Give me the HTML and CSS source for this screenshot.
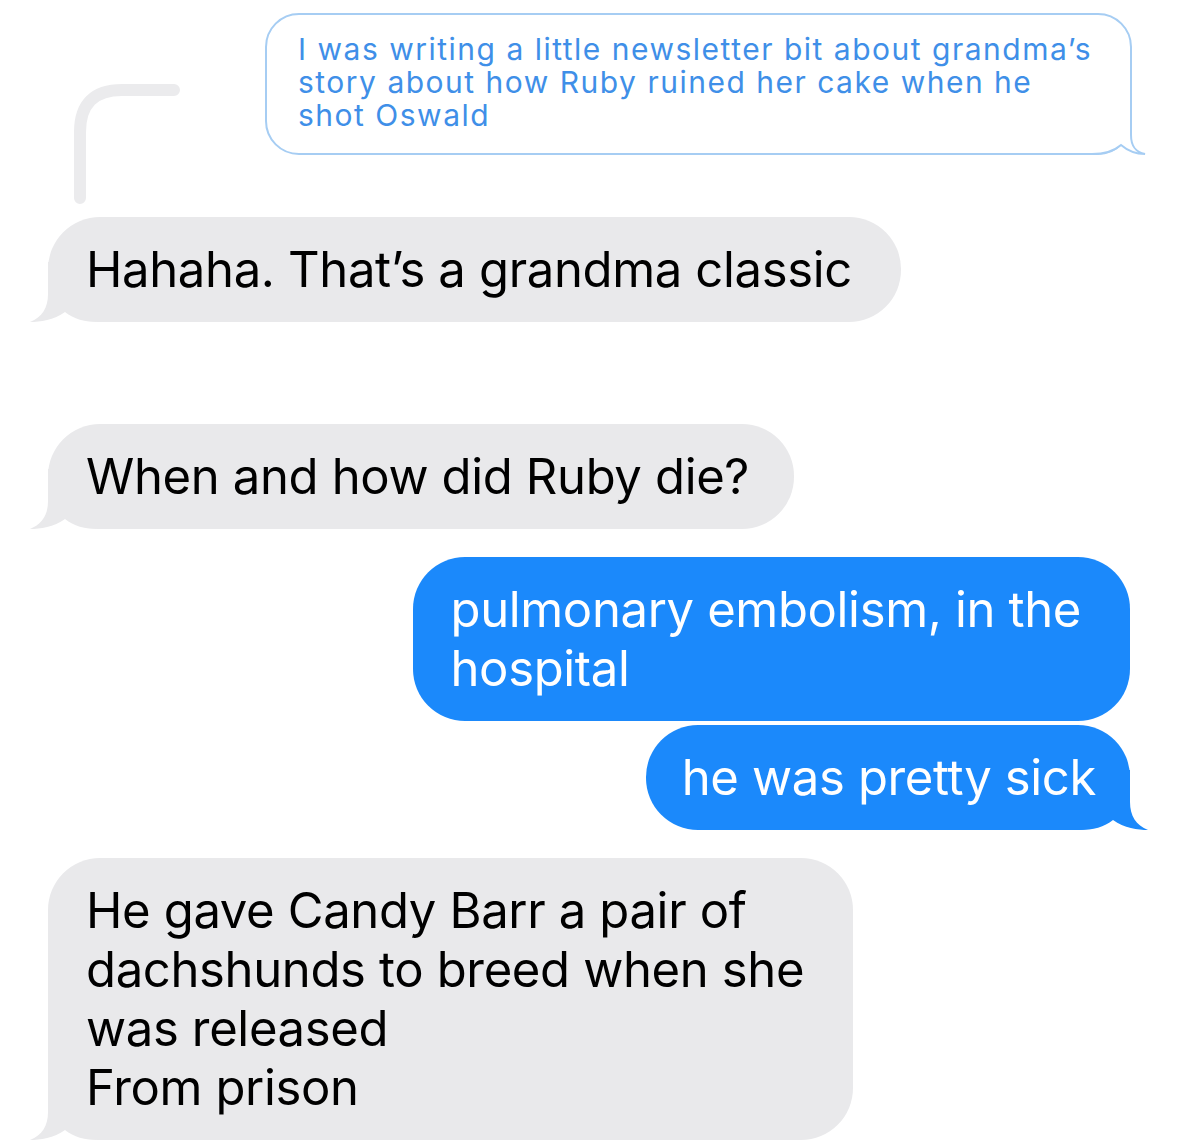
FILE: index.html
```html
<!DOCTYPE html>
<html lang="en">
<head>
<meta charset="utf-8">
<title>Messages</title>
<link rel="stylesheet" href="styles.css">
</head>
<body>
<div class="chat">
  <div class="reply-row">
    <svg class="connector" width="112" height="120" viewBox="0 0 112 120">
      <path d="M10,114 L10,48 C10,20 24,6 52,6 L104,6" fill="none" stroke="#ebebed" stroke-width="12" stroke-linecap="round"/>
    </svg>
    <div class="quote">
      <span class="txt">I was writing a little newsletter bit about grandma’s<br>story about how Ruby ruined her cake when he<br>shot Oswald</span>
      <svg class="quote-tail" width="60" height="50" viewBox="0 0 60 50">
        <path d="M43,0 L43,30 C43,42 48,47 57,49 C49,49 40,46 33,40 C26,46 18,49 4,49 L0,49" fill="#fff" stroke="#a6cdf3" stroke-width="2"/>
      </svg>
    </div>
  </div>

  <div class="msg them first">
    <span class="txt">Hahaha. That’s a grandma classic</span>
    <svg class="tail-left" width="80" height="60" viewBox="0 0 80 60"><path d="M20,0 L20,32 C20,46 14,55 2,60 C12,60 26,58 37,50 C46,57 56,60 72,60 L80,60 L80,0 Z" fill="#e9e9eb"/></svg>
  </div>

  <div class="msg them second">
    <span class="txt">When and how did Ruby die?</span>
    <svg class="tail-left" width="80" height="60" viewBox="0 0 80 60"><path d="M20,0 L20,32 C20,46 14,55 2,60 C12,60 26,58 37,50 C46,57 56,60 72,60 L80,60 L80,0 Z" fill="#e9e9eb"/></svg>
  </div>

  <div class="msg me third"><span class="txt">pulmonary embolism, in the<br>hospital</span></div>

  <div class="msg me fourth">
    <span class="txt">he was pretty sick</span>
    <svg class="tail-right" width="80" height="60" viewBox="0 0 80 60"><path d="M60,0 L60,32 C60,46 66,55 78,60 C68,60 54,58 43,50 C34,57 24,60 8,60 L0,60 L0,0 Z" fill="#1b89fb"/></svg>
  </div>

  <div class="msg them fifth">
    <span class="txt">He gave Candy Barr a pair of<br>dachshunds to breed when she<br>was released<br>From prison</span>
    <svg class="tail-left" width="80" height="60" viewBox="0 0 80 60"><path d="M20,0 L20,32 C20,46 14,55 2,60 C12,60 26,58 37,50 C46,57 56,60 72,60 L80,60 L80,0 Z" fill="#e9e9eb"/></svg>
  </div>
</div>
</body>
</html>
```

FILE: styles.css
```css
* { box-sizing: border-box; }

html, body {
  margin: 0;
  padding: 0;
  background: #ffffff;
}

body {
  font-family: "Inter", "Liberation Sans", sans-serif;
  width: 1179px;
  height: 1147px;
  overflow: hidden;
}

.chat {
  display: flex;
  flex-direction: column;
  align-items: flex-start;
  padding: 13px 0 0 0;
}

.txt {
  position: relative;
  z-index: 2;
}

.reply-row {
  display: flex;
  align-items: flex-start;
  width: 100%;
}

.connector {
  display: block;
  margin-left: 70px;
  margin-top: 71px;
  flex: none;
}

.quote {
  position: relative;
  margin-left: 83px;
  width: 867px;
  height: 142px;
  border: 2px solid #a6cdf3;
  border-radius: 34px;
  padding: 18px 20px 0 31px;
  color: #3f8fe8;
  font-size: 30px;
  line-height: 33px;
  letter-spacing: 1.5px;
  white-space: nowrap;
}

.quote-tail {
  position: absolute;
  right: -18px;
  bottom: -2px;
  z-index: 1;
  display: block;
}

.msg {
  position: relative;
  font-size: 49px;
  line-height: 59px;
  padding: 23px 49px 23px 38px;
  border-radius: 52px;
  letter-spacing: -0.35px;
  white-space: nowrap;
}

.them {
  background: #e9e9eb;
  color: #000;
  margin-left: 48px;
}

.me {
  background: #1b89fb;
  color: #fff;
  align-self: flex-end;
  margin-right: 49px;
  padding-left: 37px;
}

.first { margin-top: 13px; }
.second {
  margin-top: 102px;
  padding-right: 45px;
}
.third { margin-top: 28px; }
.fourth {
  margin-top: 4px;
  padding-left: 36px;
  padding-right: 34px;
}
.fifth { margin-top: 28px; }

.tail-left {
  position: absolute;
  left: -20px;
  bottom: 0;
  z-index: 1;
  display: block;
}

.tail-right {
  position: absolute;
  right: -20px;
  bottom: 0;
  z-index: 1;
  display: block;
}
```
